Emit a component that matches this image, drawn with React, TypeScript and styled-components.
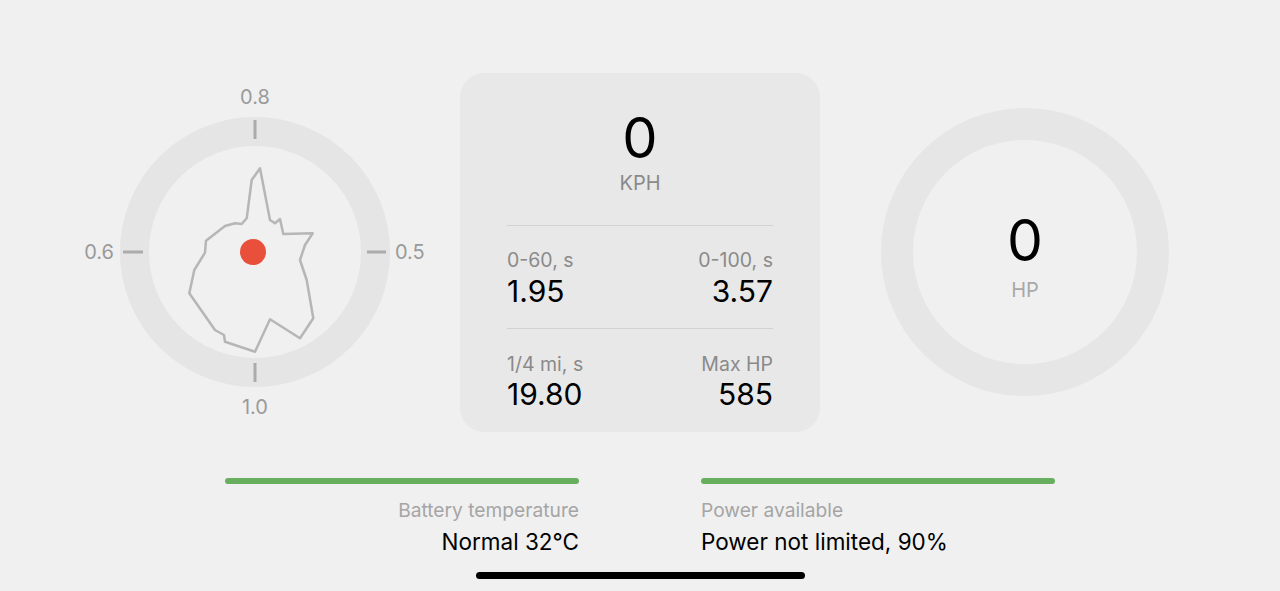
import React from "react"
import styled, { createGlobalStyle } from "styled-components"

const GlobalStyle = createGlobalStyle`
    html, body {
        margin: 0;
        padding: 0;
        background: #f0f0f0;
        font-family: Inter, "Liberation Sans", sans-serif;
    }
    * {
        box-sizing: border-box;
    }
`

const Screen = styled.div({
    width: "1280px",
    height: "591px",
    paddingTop: "72px",
    display: "flex",
    flexDirection: "column",
    alignItems: "center",
    overflow: "hidden",
    background: "#f0f0f0"
})

const TopRow = styled.div({
    display: "grid",
    gridTemplateColumns: "360px 360px 360px",
    columnGap: "25px",
    alignItems: "center",
    height: "360px"
})

const GaugeCell = styled.div({
    display: "flex",
    justifyContent: "center",
    alignItems: "center",
    height: "360px"
})

const StatsCard = styled.div({
    width: "360px",
    height: "359px",
    background: "#e8e8e8",
    borderRadius: "24px",
    padding: "0 47px",
    display: "flex",
    flexDirection: "column"
})

const SpeedValue = styled.div({
    marginTop: "35px",
    fontSize: "56px",
    lineHeight: "60px",
    textAlign: "center",
    color: "#000"
})

const SpeedUnit = styled.div({
    marginTop: "3px",
    fontSize: "20px",
    lineHeight: "24px",
    textAlign: "center",
    color: "#8a8a8a"
})

const Divider = styled.div<{ gap: number }>(({ gap }) => ({
    marginTop: `${gap}px`,
    height: "1px",
    background: "#d2d2d2"
}))

const StatRow = styled.div<{ pad: number }>(({ pad }) => ({
    display: "flex",
    justifyContent: "space-between",
    paddingTop: `${pad}px`
}))

const Stat = styled.div<{ right?: boolean }>(({ right }) => ({
    display: "flex",
    flexDirection: "column",
    alignItems: right ? "flex-end" : "flex-start"
}))

const StatLabel = styled.div({
    fontSize: "19.5px",
    lineHeight: "24px",
    color: "#8a8a8a"
})

const StatValue = styled.div<{ nudge: number }>(({ nudge }) => ({
    marginTop: `${nudge}px`,
    fontSize: "30px",
    lineHeight: "34px",
    color: "#000"
}))

const PowerRing = styled.div({
    width: "288px",
    height: "288px",
    borderRadius: "50%",
    border: "32px solid #e6e6e6",
    display: "flex",
    flexDirection: "column",
    alignItems: "center",
    justifyContent: "center",
    paddingTop: "9px",
    gap: "7px"
})

const PowerValue = styled.div({
    fontSize: "57px",
    lineHeight: "60px",
    color: "#000"
})

const PowerUnit = styled.div({
    fontSize: "20px",
    lineHeight: "24px",
    color: "#a8a8a8"
})

const StatusRow = styled.div({
    marginTop: "46px",
    display: "grid",
    gridTemplateColumns: "354px 354px",
    columnGap: "122px"
})

const Status = styled.div<{ right?: boolean }>(({ right }) => ({
    display: "flex",
    flexDirection: "column",
    alignItems: right ? "flex-end" : "flex-start"
}))

const StatusBar = styled.div({
    width: "100%",
    height: "6px",
    borderRadius: "3px",
    background: "#67ae5f"
})

const StatusLabel = styled.div({
    marginTop: "14px",
    fontSize: "19.2px",
    lineHeight: "24px",
    color: "#a5a5a5"
})

const StatusValue = styled.div({
    marginTop: "6px",
    fontSize: "22.5px",
    lineHeight: "28px",
    color: "#000"
})

const HomeIndicator = styled.div({
    marginTop: "16px",
    width: "329px",
    height: "7px",
    borderRadius: "4px",
    background: "#000"
})

const frictionShape = [
    [185, 96.3], [195, 148], [200, 151.3], [205, 147], [208.3, 162], [237.7, 161.3],
    [230, 173], [225, 188], [231.7, 208], [238.3, 246.3], [225, 266.3], [195, 247.3],
    [180, 279.7], [150, 269.7], [149, 263], [140, 258], [114.3, 221.3], [119.3, 198],
    [130, 180.7], [131, 168.7], [150, 154], [160, 151.3], [166.7, 152], [171.7, 146.3],
    [176.7, 108]
]

const GForceGauge: React.FC = () => {
    const tickColor = "#ababab"
    const labelStyle = { fontSize: 20, fill: "#9a9a9a", fontFamily: "Inter, 'Liberation Sans', sans-serif" }

    return (
        <svg width="360" height="360" viewBox="0 0 360 360">
            <circle cx="180" cy="180" r="120.5" fill="none" stroke="#e5e5e5" strokeWidth="29" />
            <line x1="180" y1="48" x2="180" y2="67" stroke={tickColor} strokeWidth="3" />
            <line x1="180" y1="291" x2="180" y2="310" stroke={tickColor} strokeWidth="3" />
            <line x1="48" y1="180" x2="68" y2="180" stroke={tickColor} strokeWidth="3" />
            <line x1="292" y1="180" x2="311" y2="180" stroke={tickColor} strokeWidth="3" />
            <text x="180" y="25" textAnchor="middle" dominantBaseline="central" style={labelStyle}>0.8</text>
            <text x="180" y="335" textAnchor="middle" dominantBaseline="central" style={labelStyle}>1.0</text>
            <text x="39" y="180" textAnchor="end" dominantBaseline="central" style={labelStyle}>0.6</text>
            <text x="320" y="180" textAnchor="start" dominantBaseline="central" style={labelStyle}>0.5</text>
            <polygon
                points={frictionShape.map(p => p.join(",")).join(" ")}
                fill="none"
                stroke="#b6b6b6"
                strokeWidth="2.5"
                strokeLinejoin="round"
            />
            <circle cx="178" cy="180" r="13" fill="#e8503c" />
        </svg>
    )
}

const App: React.FC = () => {
    return (
        <>
            <GlobalStyle />
            <Screen>
                <TopRow>
                    <GaugeCell>
                        <GForceGauge />
                    </GaugeCell>
                    <StatsCard>
                        <SpeedValue>0</SpeedValue>
                        <SpeedUnit>KPH</SpeedUnit>
                        <Divider gap={30} />
                        <StatRow pad={22}>
                            <Stat>
                                <StatLabel>0-60, s</StatLabel>
                                <StatValue nudge={2}>1.95</StatValue>
                            </Stat>
                            <Stat right>
                                <StatLabel>0-100, s</StatLabel>
                                <StatValue nudge={2}>3.57</StatValue>
                            </Stat>
                        </StatRow>
                        <Divider gap={20} />
                        <StatRow pad={23}>
                            <Stat>
                                <StatLabel>1/4 mi, s</StatLabel>
                                <StatValue nudge={1}>19.80</StatValue>
                            </Stat>
                            <Stat right>
                                <StatLabel>Max HP</StatLabel>
                                <StatValue nudge={1}>585</StatValue>
                            </Stat>
                        </StatRow>
                    </StatsCard>
                    <GaugeCell>
                        <PowerRing>
                            <PowerValue>0</PowerValue>
                            <PowerUnit>HP</PowerUnit>
                        </PowerRing>
                    </GaugeCell>
                </TopRow>
                <StatusRow>
                    <Status right>
                        <StatusBar />
                        <StatusLabel>Battery temperature</StatusLabel>
                        <StatusValue>Normal 32°C</StatusValue>
                    </Status>
                    <Status>
                        <StatusBar />
                        <StatusLabel>Power available</StatusLabel>
                        <StatusValue>Power not limited, 90%</StatusValue>
                    </Status>
                </StatusRow>
                <HomeIndicator />
            </Screen>
        </>
    )
}

export default App
